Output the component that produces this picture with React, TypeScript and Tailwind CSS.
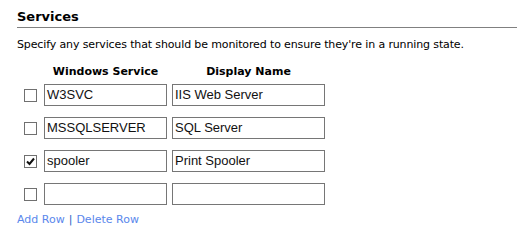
const rows = [
  { checked: false, name: "W3SVC", display: "IIS Web Server" },
  { checked: false, name: "MSSQLSERVER", display: "SQL Server" },
  { checked: true, name: "spooler", display: "Print Spooler" },
  { checked: false, name: "", display: "" },
]

function Check({ checked }: { checked: boolean }) {
  return (
    <span className="flex h-[13px] w-[13px] items-center justify-center border border-[#707070] bg-white">
      {checked && (
        <svg width="9" height="9" viewBox="0 0 9 9">
          <path d="M1 4.5 L3.5 7 L8 1.5" fill="none" stroke="#111" strokeWidth="2" />
        </svg>
      )}
    </span>
  )
}

export default function App() {
  return (
    <div className="h-[240px] w-[530px] bg-white pl-[17px] pt-[9px] font-['DejaVu_Sans',sans-serif] text-black">
      <h2 className="w-[500px] border-b border-[#808080] pb-[2px] text-[13px] font-bold leading-[16px]">
        Services
      </h2>
      <p className="mt-[10px] text-[11px] leading-[14px] tracking-[-0.13px]">
        Specify any services that should be monitored to ensure they're in a running state.
      </p>

      <div className="mt-[13px] grid grid-cols-[27px_128px_153px] gap-y-[11px]">
        <div />
        <div className="-mb-[6px] pr-[5px] text-center text-[11px] font-bold leading-[14px]">Windows Service</div>
        <div className="-mb-[6px] text-center text-[11px] font-bold leading-[14px]">Display Name</div>

        {rows.map((row, i) => (
          <div key={i} className="contents">
            <div className="flex items-center pl-[7px]">
              <Check checked={row.checked} />
            </div>
            <div className="pr-[5px]">
              <div className="flex h-[22px] w-[123px] items-center border border-[#767676] px-[2px] font-['Liberation_Sans',sans-serif] text-[13px] text-[#111]">
                {row.name}
              </div>
            </div>
            <div className="flex h-[22px] w-[153px] items-center border border-[#767676] px-[2px] font-['Liberation_Sans',sans-serif] text-[13px] text-[#111]">
              {row.display}
            </div>
          </div>
        ))}
      </div>

      <div className="mt-[8px] text-[11px] leading-[14px]">
        <a className="text-[#5a87ec]">Add Row</a>
        <span className="mx-[4px] text-[#2b5fc4]">|</span>
        <a className="text-[#5a87ec]">Delete Row</a>
      </div>
    </div>
  )
}
